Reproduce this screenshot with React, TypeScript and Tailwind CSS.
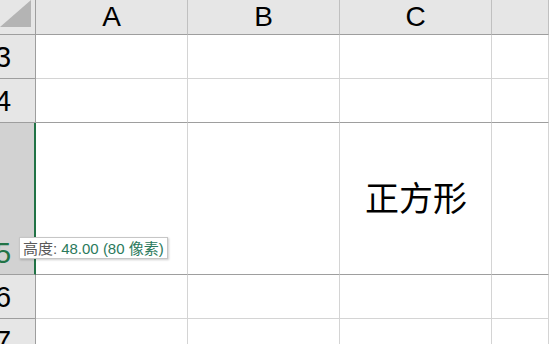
const COLS = ["A", "B", "C", "D"]

const ROWS = [
  { num: 3, h: "h-[44px]", sel: false, dark: false },
  { num: 4, h: "h-[44px]", sel: false, dark: true },
  { num: 5, h: "h-[152px]", sel: true, dark: true },
  { num: 6, h: "h-[44px]", sel: false, dark: false },
  { num: 7, h: "h-[44px]", sel: false, dark: false },
]

const FONT = "font-['Liberation_Sans','Noto_Sans_CJK_SC',sans-serif]"

function CornerCell() {
  return (
    <div className="relative h-[35px] w-[36px] border-r border-b border-[#9e9e9e] bg-[#e6e6e6]">
      {/* select-all triangle */}
      <svg className="absolute left-0 top-0" width="32" height="28" viewBox="0 0 32 28">
        <polygon points="31,0 31,27 0,27" fill="#b4b4b4" />
      </svg>
    </div>
  )
}

function ColumnHeader({ label }: { label: string }) {
  return (
    <div
      className={`flex h-[35px] items-center justify-center border-r border-b border-r-[#c0c0c0] border-b-[#9e9e9e] bg-[#e6e6e6] text-[28px] leading-none text-black ${
        label === "D" ? "w-auto flex-1" : "w-[152px]"
      }`}
    >
      {label !== "D" && <span>{label}</span>}
    </div>
  )
}

function RowHeader({ num, h, sel }: { num: number; h: string; sel: boolean }) {
  return (
    <div
      className={`flex w-[36px] items-end overflow-hidden border-b border-[#9e9e9e] ${h} ${
        sel
          ? "border-r-2 border-r-[#217346] bg-[#d2d2d2] text-[#217346]"
          : "border-r border-r-[#9e9e9e] bg-[#e6e6e6] text-black"
      }`}
    >
      <span className="-ml-[5px] pb-[6px] text-[29px] leading-none">{num}</span>
    </div>
  )
}

export default function App() {
  return (
    <div className={`relative h-[344px] w-[549px] overflow-hidden bg-white ${FONT}`}>
      {/* Column headers */}
      <div className="flex">
        <CornerCell />
        {COLS.map((c) => (
          <ColumnHeader key={c} label={c} />
        ))}
      </div>

      {/* Rows */}
      {ROWS.map((r) => (
        <div key={r.num} className="flex">
          <RowHeader num={r.num} h={r.h} sel={r.sel} />
          {COLS.map((c) => (
            <div
              key={c}
              className={`flex items-center justify-center border-r border-b border-r-[#d4d4d4] ${r.h} ${
                r.dark ? "border-b-[#9e9e9e]" : "border-b-[#d4d4d4]"
              } ${c === "D" ? "flex-1" : "w-[152px]"}`}
            >
              {r.num === 5 && c === "C" && (
                <span className="pl-[1px] text-[34px] leading-none text-black">正方形</span>
              )}
            </div>
          ))}
        </div>
      ))}

      {/* Row height tooltip */}
      <div className="absolute left-[19px] top-[237px] flex h-[22px] items-center border border-[#c6c6c6] bg-white px-[3px] text-[15px] leading-none shadow-[1px_1px_2px_rgba(0,0,0,0.2)]">
        <span className="text-[#5a5a5a]">高度:</span>
        <span className="ml-[4px] text-[#2b7a5c]">48.00 (80 像素)</span>
      </div>
    </div>
  )
}
